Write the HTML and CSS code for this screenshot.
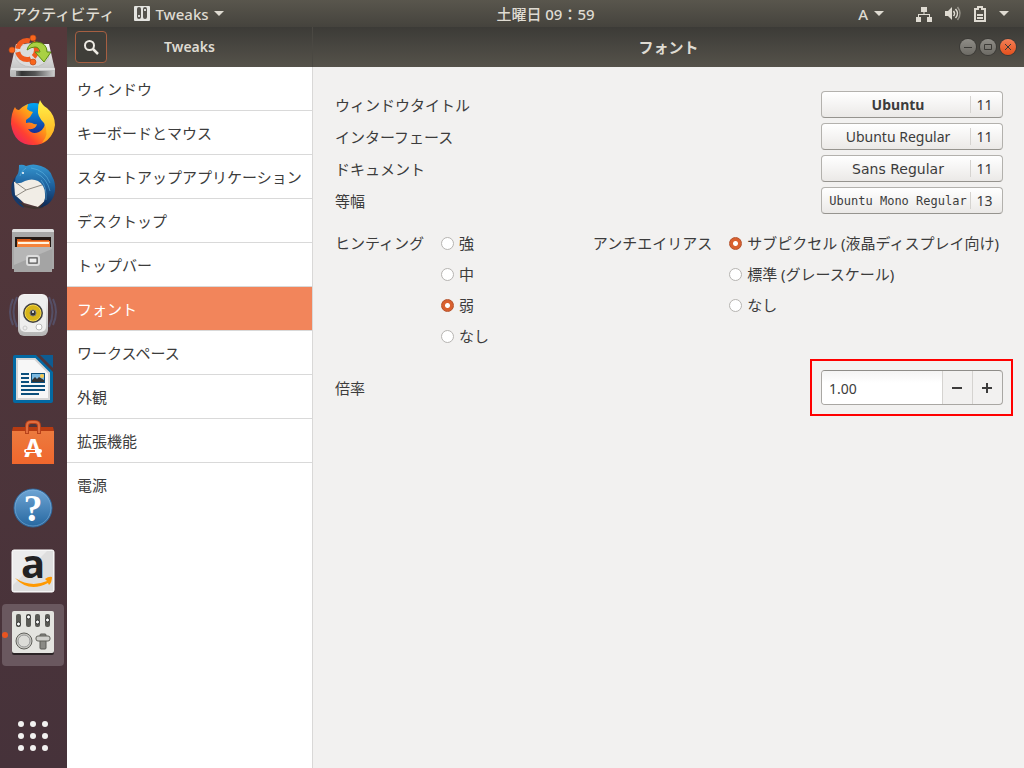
FILE: index.html
```html
<!DOCTYPE html>
<html lang="ja">
<head>
    <meta charset="UTF-8">
    <meta name="viewport" content="width=device-width, initial-scale=1.0">
    <title>Tweaks</title>
    <link rel="stylesheet" href="styles.css">
</head>
<body>
    <header class="topbar">
        <div class="topbar-left">
            <button type="button">アクティビティ</button>
            <button type="button" class="app-menu">
                <svg width="16" height="16" viewBox="0 0 16 16">
                    <rect width="16" height="15" rx="1" fill="#e4e4e0"/>
                    <rect x="3" y="1" width="4" height="12" rx="2" fill="#55534d"/>
                    <rect x="9" y="1" width="4" height="12" rx="2" fill="#55534d"/>
                    <circle cx="5" cy="10" r="1" fill="#fff"/>
                    <circle cx="11" cy="4" r="1" fill="#fff"/>
                </svg>
                <span>Tweaks</span>
                <i class="arrow"></i>
            </button>
        </div>
        <button type="button" class="clock">土曜日 09：59</button>
        <div class="topbar-right">
            <button type="button" class="input-menu">A<i class="arrow"></i></button>
            <button type="button" class="system-menu" aria-label="システム">
                <svg width="16" height="16" viewBox="0 0 16 16" fill="#dfdbd2">
                    <path d="M5 1h6v5H8.500v2H14v3h2v5h-5v-5h2V9H3v2h2v5H0v-5h2V8h5.500V6H5z"/>
                </svg>
                <svg width="16" height="16" viewBox="0 0 16 16" fill="none" stroke="#dfdbd2" stroke-width="1.500">
                    <path d="M0 5h3l4-4v13l-4-4H0z" fill="#dfdbd2" stroke="none"/>
                    <path d="M8.500 5q2 2.500 0 5M10.500 3q4 4.500 0 9"/>
                    <path d="M12.500 1q5 6.500 0 13" opacity=".5"/>
                </svg>
                <svg width="12" height="16" viewBox="0 0 12 16">
                    <path d="M4 1h4v2h3v12H1V3h3z" fill="none" stroke="#dfdbd2" stroke-width="2"/>
                    <path d="M3 8h6v2H3zM3 11h6v2H3z" fill="#dfdbd2"/>
                </svg>
                <i class="arrow"></i>
            </button>
        </div>
    </header>

    <div class="desktop">
        <aside class="dock">
            <button type="button" class="dock-item" aria-label="インストール">
                <svg width="48" height="48" viewBox="0 0 48 48">
                    <defs>
                        <linearGradient id="metal" x2="0" y2="1"><stop stop-color="#f4f4f4"/><stop offset="1" stop-color="#b5b5b5"/></linearGradient>
                        <linearGradient id="drive"><stop stop-color="#777"/><stop offset=".15" stop-color="#333"/><stop offset=".5" stop-color="#555"/><stop offset="1" stop-color="#ccc"/></linearGradient>
                    </defs>
                    <path d="M7 9h33l6 26v6q0 1-1 1H3q-2 0-2-1v-6z" fill="url(#metal)"/>
                    <ellipse cx="23" cy="20" rx="17" ry="12" fill="#dcdcdc" stroke="#aaa" stroke-width=".5"/>
                    <path d="M2 34h44" stroke="#fff"/>
                    <path d="M7 36h38v5H7z" fill="url(#drive)"/>
                    <circle cx="18" cy="15" r="9.500" fill="none" stroke="#f05a1e" stroke-width="5" stroke-dasharray="16.500 3.400" stroke-dashoffset="-11"/>
                    <g fill="#f9661c" stroke="#b94a1a" stroke-width=".7"><circle cx="24" cy="3" r="3"/><circle cx="3" cy="15" r="3"/><circle cx="24" cy="27" r="3"/></g>
                    <path d="M18 15Q20 7 28 7q10 1 10 10h4l-7 10-9-10h5q-1-5-5-5-4 0-8 3z" fill="#a9d143" stroke="#5b8c10"/>
                </svg>
            </button>
            <button type="button" class="dock-item" aria-label="Firefox">
                <svg width="48" height="48" viewBox="0 0 48 48">
                    <defs>
                        <linearGradient id="fox" x1="1" y1="0" x2="0" y2="1"><stop offset=".1" stop-color="#ffe226"/><stop offset=".45" stop-color="#ff9718"/><stop offset=".7" stop-color="#ff4031"/><stop offset="1" stop-color="#e0157a"/></linearGradient>
                        <linearGradient id="globe" x2="0" y2="1"><stop stop-color="#00a8f4"/><stop offset="1" stop-color="#1b1f8a"/></linearGradient>
                        <linearGradient id="tail" x2="0" y2="1"><stop stop-color="#fff44a"/><stop offset="1" stop-color="#ffa61a"/></linearGradient>
                    </defs>
                    <circle cx="25" cy="21" r="17" fill="url(#globe)"/>
                    <path d="M6 8q1 3 4 3 4-4 9-6l-1 5q3 3 6 3l-3 5-4 3v3q3-1 6 0 3 2 5 1-1 6-9 5 4 6 11 3 7-4 6-12 6-2 9 4-2 21-21 21T2 25Q2 14 6 8z" fill="url(#fox)"/>
                    <path d="M31 1q2 5 7 8 8 7 8 17-1 12-13 18 8-9 2-20-7-7-6-13 0-6 2-10z" fill="url(#tail)"/>
                </svg>
            </button>
            <button type="button" class="dock-item" aria-label="Thunderbird">
                <svg width="48" height="48" viewBox="0 0 48 48">
                    <defs>
                        <linearGradient id="bird" x2="0" y2="1"><stop stop-color="#3596cf"/><stop offset=".5" stop-color="#1d5f9c"/><stop offset="1" stop-color="#0d2650"/></linearGradient>
                    </defs>
                    <path d="M8 12Q0 20 3 32q4 10 12 13l-4-11 4-20z" fill="#153a6b"/>
                    <path d="M5 19l18-4 14 3 1 18-9 8-14-4-9-8z" fill="#f1ede6"/>
                    <path d="M6 19l11 8 19-6M17 27l-10 6" fill="none" stroke="#8f8a82"/>
                    <path d="M9 38l9 5 11 1 8-6-3 7-9 1-10-2z" fill="#40332f"/>
                    <path d="M10 2q4-1 7 1 7-3 15 0 9 3 11 10 4 7 3 15-2 14-16 17 7-6 6-14 0-9-7-13-6-3-13 0-5 3-9 2-2-4 1-8 2-2 2-10z" fill="url(#bird)"/>
                    <path d="M22 5q14 2 19 15M27 10q11 5 14 18M32 17q6 7 5 20M17 5q-5 3-6 8" fill="none" stroke="#69bde7" opacity=".5"/>
                    <circle cx="14" cy="10" r="1" fill="#fff"/>
                </svg>
            </button>
            <button type="button" class="dock-item" aria-label="ファイル">
                <svg width="48" height="48" viewBox="0 0 48 48">
                    <path d="M5 2h38q2 0 2 3v37H3V5q0-3 2-3z" fill="#a8a8a8"/>
                    <path d="M5 2h38q2 0 2 3H3q0-3 2-3z" fill="#e0e0e0"/>
                    <path d="M6 10h36v11H6z" fill="#241a16"/>
                    <path d="M8 12h13l2 1h17v7H8z" fill="#d65a1a"/>
                    <path d="M8 14h33v6H8z" fill="#f5833a"/>
                    <path d="M9 15h31v2H9z" fill="#fff3e0"/>
                    <path d="M5 20h38v25H5z" fill="#a4a4a4"/>
                    <path d="M5 20h38v2L5 38z" fill="#b6b6b6"/>
                    <rect x="18" y="29" width="12" height="9" rx="2" fill="#999" stroke="#ddd" stroke-width="2"/>
                    <rect x="20" y="31" width="8" height="5" fill="#eee" stroke="#555"/>
                </svg>
            </button>
            <button type="button" class="dock-item" aria-label="Rhythmbox">
                <svg width="48" height="48" viewBox="0 0 48 48">
                    <path d="M4 8q-6 13 0 26M8 6q-7 15 0 30M40 6q7 15 0 30M44 8q6 13 0 26" fill="none" stroke="#5d6f9c" stroke-width="2" opacity=".45"/>
                    <rect x="9" y="3" width="30" height="42" rx="6" fill="url(#metal)"/>
                    <rect x="11" y="4" width="26" height="37" rx="5" fill="#eee"/>
                    <circle cx="24" cy="22" r="10" fill="#444"/>
                    <circle cx="24" cy="22" r="8" fill="#d7b51a" stroke="#f3d950"/>
                    <circle cx="24" cy="22" r="3" fill="#333" stroke="#777"/>
                    <circle cx="24" cy="21" r="1" fill="#fff"/>
                    <circle cx="30" cy="36" r="3" fill="#fff" stroke="#bbb"/>
                    <circle cx="16" cy="37" r="2" fill="none" stroke="#ccc"/>
                </svg>
            </button>
            <button type="button" class="dock-item" aria-label="LibreOffice Writer">
                <svg width="48" height="48" viewBox="0 0 48 48">
                    <path d="M6 0h21l17 17v29q0 2-2 2H6q-2 0-2-2V2q0-2 2-2z" fill="#0369a3"/>
                    <path d="M31 0h13v13z" fill="#0e5c92"/>
                    <path d="M8 4h18l14 14v26H8z" fill="#f7f7f7" stroke="#d5d5d5" stroke-width="2"/>
                    <path d="M12 19h8M12 23h8M12 27h8M12 31h24M12 35h24M12 39h18" stroke="#0b4f7c" stroke-width="2"/>
                    <path d="M22 18h14v10H22z" fill="#0b4f7c"/>
                    <path d="M23 19h12v8H23z" fill="#7cb9e0"/>
                    <circle cx="33" cy="21" r="2" fill="#f5c84b"/>
                    <path d="M23 27v-2l3-3 2 2 2-2 5 3v2z" fill="#333"/>
                </svg>
            </button>
            <button type="button" class="dock-item" aria-label="Ubuntu ソフトウェア">
                <svg width="48" height="48" viewBox="0 0 48 48">
                    <defs>
                        <linearGradient id="bag" x2="0" y2="1"><stop stop-color="#ec7a3e"/><stop offset="1" stop-color="#f0672d"/></linearGradient>
                    </defs>
                    <path d="M4 8h40l1 4v33H3V12z" fill="#b63b12"/>
                    <path d="M3 12h42v33H3z" fill="url(#bag)"/>
                    <path d="M18 15V7q0-4 4-4h4q4 0 4 4v8" fill="none" stroke="#b8421b" stroke-width="4"/>
                    <path d="M18 14V7q0-4 4-4h4q4 0 4 4v7" fill="none" stroke="#e16e3f" stroke-width="2"/>
                    <text x="24" y="38" class="bag-letter">A</text>
                    <rect x="15" y="30" width="18" height="4" rx="2" fill="#fff"/>
                    <path d="M17 32h9" stroke="#f0672d" stroke-width="2"/>
                </svg>
            </button>
            <button type="button" class="dock-item" aria-label="ヘルプ">
                <svg width="48" height="48" viewBox="0 0 48 48">
                    <defs>
                        <linearGradient id="help" x2="0" y2="1"><stop stop-color="#6fa5d4"/><stop offset="1" stop-color="#2667a0"/></linearGradient>
                    </defs>
                    <circle cx="24" cy="25" r="19" fill="url(#help)" stroke="#2c659b"/>
                    <circle cx="24" cy="25" r="18" fill="none" stroke="#8bb9df" opacity=".5"/>
                    <text x="24" y="38" class="help-letter">?</text>
                </svg>
            </button>
            <button type="button" class="dock-item" aria-label="Amazon">
                <svg width="48" height="48" viewBox="0 0 48 48">
                    <rect x="3" y="3" width="42" height="42" rx="2" fill="#ececec" stroke="#fff"/>
                    <path d="M4 44V38L38 4h6v40z" fill="#dedede"/>
                    <text x="24" y="31" class="amazon-letter">a</text>
                    <path d="M6 31q16 10 32 3l-2-2q4-3 7-2 0 5-3 8l-1-2Q20 46 6 31z" fill="#ff9900"/>
                </svg>
            </button>
            <button type="button" class="dock-item active" aria-label="Tweaks">
                <svg width="48" height="48" viewBox="0 0 48 48">
                    <rect x="3" y="2" width="42" height="42" rx="2" fill="#2b2426"/>
                    <rect x="3" y="0" width="42" height="42" rx="2" fill="#e4e4e0"/>
                    <g fill="#5a5a56"><rect x="7" y="3" width="5" height="13" rx="2"/><rect x="17" y="3" width="5" height="13" rx="2"/><rect x="26" y="3" width="5" height="13" rx="2"/><rect x="36" y="3" width="5" height="13" rx="2"/></g>
                    <g fill="#fff" stroke="#333"><circle cx="9.500" cy="13" r="2"/><circle cx="19.500" cy="6" r="2"/><circle cx="28.500" cy="11" r="2"/><circle cx="38.500" cy="9" r="2"/></g>
                    <circle cx="15" cy="30" r="8" fill="#c9c9c4" stroke="#60605b"/>
                    <circle cx="15" cy="30" r="6" fill="#dcdcd8" stroke="#999"/>
                    <rect x="31" y="23" width="6" height="15" rx="1" fill="#8a8a85" stroke="#5b5b56"/>
                    <rect x="27" y="25" width="14" height="5" rx="2" fill="#d0d0cc" stroke="#60605b"/>
                </svg>
            </button>
            <button type="button" class="dock-item apps" aria-label="アプリケーションを表示する">
                <svg width="48" height="48" viewBox="0 0 48 48" fill="#f2f1f0">
                    <circle cx="12" cy="12" r="3"/><circle cx="24" cy="12" r="3"/><circle cx="36" cy="12" r="3"/>
                    <circle cx="12" cy="24" r="3"/><circle cx="24" cy="24" r="3"/><circle cx="36" cy="24" r="3"/>
                    <circle cx="12" cy="36" r="3"/><circle cx="24" cy="36" r="3"/><circle cx="36" cy="36" r="3"/>
                </svg>
            </button>
        </aside>

        <div class="window">
            <div class="titlebar">
                <div class="title-left">
                    <button type="button" class="search" aria-label="検索">
                        <svg width="16" height="16" viewBox="0 0 16 16" fill="none" stroke="#eeebe4" stroke-width="2">
                            <circle cx="6.500" cy="6.500" r="4.500"/><path d="M10 10l5 5" stroke-width="2.500"/>
                        </svg>
                    </button>
                    <h1>Tweaks</h1>
                </div>
                <div class="title-right">
                    <h2>フォント</h2>
                    <div class="controls">
                        <button type="button" aria-label="最小化"><svg width="16" height="16" viewBox="0 0 16 16"><path d="M4 8.500h8"/></svg></button>
                        <button type="button" aria-label="最大化"><svg width="16" height="16" viewBox="0 0 16 16"><path d="M4.500 5.500h7v5h-7z"/></svg></button>
                        <button type="button" class="close" aria-label="閉じる"><svg width="16" height="16" viewBox="0 0 16 16"><path d="M5 5l6 6M11 5l-6 6"/></svg></button>
                    </div>
                </div>
            </div>

            <div class="content">
                <nav class="sidebar">
                    <ul>
                        <li><a href="#">ウィンドウ</a></li>
                        <li><a href="#">キーボードとマウス</a></li>
                        <li><a href="#">スタートアップアプリケーション</a></li>
                        <li><a href="#">デスクトップ</a></li>
                        <li><a href="#">トップバー</a></li>
                        <li><a href="#" class="selected">フォント</a></li>
                        <li><a href="#">ワークスペース</a></li>
                        <li><a href="#">外観</a></li>
                        <li><a href="#">拡張機能</a></li>
                        <li><a href="#">電源</a></li>
                    </ul>
                </nav>

                <main>
                    <div class="fonts">
                        <div class="row">
                            <label for="fontTitle">ウィンドウタイトル</label>
                            <button type="button" id="fontTitle" class="font-button"><span class="name bold">Ubuntu</span><span class="size">11</span></button>
                        </div>
                        <div class="row">
                            <label for="fontInterface">インターフェース</label>
                            <button type="button" id="fontInterface" class="font-button"><span class="name">Ubuntu Regular</span><span class="size">11</span></button>
                        </div>
                        <div class="row">
                            <label for="fontDocument">ドキュメント</label>
                            <button type="button" id="fontDocument" class="font-button"><span class="name sans">Sans Regular</span><span class="size">11</span></button>
                        </div>
                        <div class="row">
                            <label for="fontMono">等幅</label>
                            <button type="button" id="fontMono" class="font-button"><span class="name mono">Ubuntu Mono Regular</span><span class="size">13</span></button>
                        </div>
                    </div>

                    <div class="rendering">
                        <div class="group" role="radiogroup" aria-labelledby="hintingLabel">
                            <span id="hintingLabel">ヒンティング</span>
                            <div class="options">
                                <label><input type="radio" name="hinting">強</label>
                                <label><input type="radio" name="hinting">中</label>
                                <label><input type="radio" name="hinting" checked>弱</label>
                                <label><input type="radio" name="hinting">なし</label>
                            </div>
                        </div>
                        <div class="group" role="radiogroup" aria-labelledby="antialiasLabel">
                            <span id="antialiasLabel">アンチエイリアス</span>
                            <div class="options">
                                <label><input type="radio" name="antialias" checked>サブピクセル (液晶ディスプレイ向け)</label>
                                <label><input type="radio" name="antialias">標準 (グレースケール)</label>
                                <label><input type="radio" name="antialias">なし</label>
                            </div>
                        </div>
                    </div>

                    <div class="row scale">
                        <label for="scale">倍率</label>
                        <div class="spin">
                            <input type="text" id="scale" value="1.00">
                            <button type="button" aria-label="減らす"><svg width="12" height="12" viewBox="0 0 12 12"><path d="M1 6h10"/></svg></button>
                            <button type="button" aria-label="増やす"><svg width="12" height="12" viewBox="0 0 12 12"><path d="M1 6h10M6 1v10"/></svg></button>
                        </div>
                    </div>
                </main>
            </div>
        </div>
    </div>
</body>
</html>
```

FILE: styles.css
```css
* {
    box-sizing: border-box;
}
body {
    margin: 0;
    min-height: 100vh;
    display: flex;
    flex-direction: column;
    font-family: "Noto Sans", "Noto Sans CJK JP", sans-serif;
    font-size: 15px;
    line-height: 20px;
    color: #3c3c3c;
    background-color: #4d3539;
}
button,
input {
    font: inherit;
    color: inherit;
    margin: 0;
}
button {
    padding: 0;
    border: none;
    background: none;
    cursor: pointer;
}
svg {
    display: block;
    overflow: visible;
}

/* top panel */
.topbar {
    height: 27px;
    display: grid;
    grid-template-columns: 67px 1fr auto 1fr;
    align-items: center;
    background: linear-gradient(#59564d, #45433d);
    color: #dfdbd2;
    font-weight: 500;
}
.topbar-left {
    grid-column: 1 / 3;
    display: flex;
    gap: 16px;
    padding-left: 12px;
}
.topbar button {
    display: flex;
    align-items: center;
    white-space: pre;
}
.topbar-left {
    gap: 20px;
}
.topbar .app-menu {
    gap: 5px;
}
.topbar-right {
    display: flex;
    justify-content: flex-end;
    gap: 32px;
    padding-right: 15px;
}
.topbar .input-menu {
    gap: 6px;
}
.topbar .system-menu {
    gap: 13px;
}
.arrow {
    border: 5px solid transparent;
    border-top-color: #dfdbd2;
    border-bottom: none;
}

.desktop {
    flex: 1;
    display: flex;
}

/* dock */
.dock {
    flex: none;
    width: 67px;
    padding: 1px 3px 1px 2px;
    display: flex;
    flex-direction: column;
    gap: 2px;
    background: linear-gradient(#55383b, #46323a);
}
.dock-item {
    position: relative;
    height: 62px;
    display: flex;
    align-items: center;
    justify-content: center;
    border-radius: 4px;
}
.dock-item.active {
    background-color: #6a585f;
}
.dock-item.active::before {
    content: "";
    position: absolute;
    left: 0;
    top: 28px;
    width: 6px;
    height: 6px;
    border-radius: 50%;
    background-color: #e95420;
}
.dock-item.apps {
    margin-top: auto;
}
.bag-letter {
    font: bold 25px "Open Sans", sans-serif;
    fill: #fff;
    text-anchor: middle;
}
.help-letter {
    font: bold 38px "Liberation Serif", serif;
    fill: #fff;
    text-anchor: middle;
}
.amazon-letter {
    font: bold 40px "Open Sans", sans-serif;
    fill: #222;
    text-anchor: middle;
}

/* window */
.window {
    flex: 1;
    display: flex;
    flex-direction: column;
    background-color: #f2f1f0;
}
.titlebar {
    height: 40px;
    display: flex;
    background: linear-gradient(#3c3b37, #55524a);
    color: #dfdbd2;
}
.titlebar h1,
.titlebar h2 {
    margin: 0;
    font-size: 15px;
    font-weight: 600;
    text-align: center;
}
.titlebar h1 {
    font-size: 14px;
}
.title-left {
    width: 246px;
    padding: 0 8px;
    display: grid;
    grid-template-columns: 32px 1fr 32px;
    align-items: center;
    border-right: 1px solid #4a4842;
}
.search {
    height: 32px;
    display: flex;
    align-items: center;
    justify-content: center;
    border: 1px solid #a65f42;
    border-radius: 4px;
    background-color: #3f3e39;
}
.title-right {
    flex: 1;
    padding-right: 8px;
    display: grid;
    grid-template-columns: 1fr auto 1fr;
    align-items: center;
}
.title-right h2 {
    grid-column: 2;
    padding-left: 8px;
}
.controls {
    display: flex;
    justify-content: flex-end;
    gap: 4px;
}
.controls button {
    border-radius: 50%;
    background: linear-gradient(#8f8d87, #6d6b65);
    box-shadow: 0 0 0 1px #3c3b37;
}
.controls .close {
    background: linear-gradient(#f37f57, #e4501c);
}
.controls path {
    fill: none;
    stroke: #3c3b37;
}
.content {
    flex: 1;
    display: flex;
}

/* category list */
.sidebar {
    flex: none;
    width: 246px;
    background-color: #fff;
    border-right: 1px solid #d9d8d7;
}
.sidebar ul {
    list-style-type: none;
    margin: 0;
    padding: 0;
}
.sidebar li {
    border-bottom: 1px solid #d9d9d9;
}
.sidebar li:last-child {
    border-bottom: none;
}
.sidebar a {
    display: block;
    padding: 12px 10px 11px;
    color: #3c3c3c;
    text-decoration: none;
    white-space: nowrap;
}
.sidebar a.selected {
    background-color: #f2855b;
    color: #fff;
}

/* font settings */
main {
    flex: 1;
    padding: 24px 21px 24px 22px;
}
.row {
    display: flex;
    align-items: center;
    justify-content: space-between;
}
.fonts {
    display: flex;
    flex-direction: column;
    gap: 5px;
}
.font-button {
    width: 182px;
    height: 27px;
    display: flex;
    align-items: center;
    border: 1px solid #b3b1ad;
    border-bottom-color: #96948f;
    border-radius: 4px;
    background: linear-gradient(#fff, #ebe9e7);
    font-size: 14px;
}
.font-button .name {
    flex: 1;
    padding-left: 4px;
    white-space: nowrap;
}
.font-button .bold {
    font-weight: 700;
}
.font-button .sans {
    font-family: "DejaVu Sans", sans-serif;
}
.font-button .mono {
    font-family: "DejaVu Sans Mono", monospace;
    font-size: 12px;
}
.font-button .size {
    width: 32px;
    height: 17px;
    line-height: 17px;
    padding-right: 4px;
    border-left: 1px solid #d5d3d0;
}
.rendering {
    display: flex;
    justify-content: space-between;
    margin-top: 19px;
    padding-right: 4px;
}
.group {
    display: flex;
    gap: 17px;
}
.options {
    display: flex;
    flex-direction: column;
    gap: 11px;
}
.options label {
    display: flex;
    align-items: center;
    gap: 5px;
    white-space: nowrap;
}
.options input {
    appearance: none;
    width: 13px;
    height: 13px;
    border: 1px solid #b6b4b1;
    border-radius: 50%;
    background-color: #fff;
}
.options input:checked {
    border-color: #b5512b;
    background: radial-gradient(circle, #fff 2px, #d9602f 3px);
}
.scale {
    margin-top: 24px;
}
.spin {
    position: relative;
    width: 182px;
    height: 35px;
    display: flex;
    border: 1px solid #a9a7a3;
    border-top-color: #8f8d89;
    border-radius: 4px;
}
/* highlight frame around the scale value */
.spin::after {
    content: "";
    position: absolute;
    inset: -12px -11px -12px -12px;
    border: 2px solid #f00;
    pointer-events: none;
}
.spin input {
    flex: 1;
    min-width: 0;
    padding: 2px 7px 0;
    border: none;
    border-radius: 3px 0 0 3px;
    background: linear-gradient(#f4f4f4, #fff 12px);
    font-size: 14px;
    outline: none;
}
.spin button {
    width: 30px;
    padding-right: 2px;
    display: flex;
    align-items: center;
    justify-content: center;
    border-left: 1px solid #d5d3d0;
}
.spin path {
    stroke: #3c3c3c;
    stroke-width: 2;
}
```
